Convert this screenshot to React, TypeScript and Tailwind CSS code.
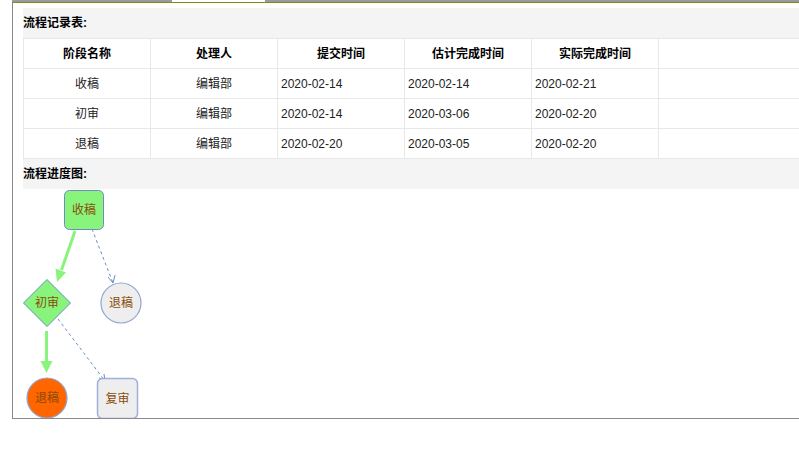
import React from "react";

const rows = [
  ["收稿", "编辑部", "2020-02-14", "2020-02-14", "2020-02-21"],
  ["初审", "编辑部", "2020-02-14", "2020-03-06", "2020-02-20"],
  ["退稿", "编辑部", "2020-02-20", "2020-03-05", "2020-02-20"],
];
const heads = ["阶段名称", "处理人", "提交时间", "估计完成时间", "实际完成时间", ""];

function Flow() {
  const blue = "#6c8ebf";
  const green = "#88f47c";
  const txt = "#8a4b08";
  return (
    <svg width="300" height="232" className="block overflow-visible" style={{ overflow: "visible" }}>
      <line x1="52" y1="42" x2="38.5" y2="81" stroke={green} strokeWidth="3" />
      <polygon points="34,93 43,83.5 32.5,79.5" fill={green} />
      <line x1="23.5" y1="142" x2="23.5" y2="173" stroke={green} strokeWidth="3" />
      <polygon points="17.5,172 29.5,172 23.5,184" fill={green} />
      <line x1="69" y1="40" x2="90" y2="94" stroke={blue} strokeWidth="1" strokeDasharray="3 3" />
      <polyline points="85,88 90,94 92,86" fill="none" stroke={blue} strokeWidth="1" />
      <line x1="35" y1="130" x2="82" y2="192" stroke={blue} strokeWidth="1" strokeDasharray="3 3" />
      <polyline points="76,189 82,192 81,185" fill="none" stroke={blue} strokeWidth="1" />
      <rect x="41.5" y="1.5" width="39" height="39" rx="5" fill={green} stroke={blue} strokeWidth="1" />
      <text x="61" y="25" textAnchor="middle" fontSize="12" fill={txt}>收稿</text>
      <polygon points="0.5,114 24,90.5 47.5,114 24,137.5" fill={green} stroke={blue} strokeWidth="1" />
      <text x="24" y="118" textAnchor="middle" fontSize="12" fill={txt}>初审</text>
      <circle cx="98" cy="114" r="20" fill="#eeeeee" stroke="#8fa6d3" strokeWidth="1.2" />
      <text x="98" y="118" textAnchor="middle" fontSize="12" fill={txt}>退稿</text>
      <circle cx="24" cy="209" r="20" fill="#ff6600" stroke="#8fa6d3" strokeWidth="1.2" />
      <text x="24" y="213" textAnchor="middle" fontSize="12" fill={txt}>退稿</text>
      <rect x="74.5" y="189.5" width="40" height="40" rx="5" fill="#eeeeee" stroke="#9db0d8" strokeWidth="1.5" />
      <text x="94.5" y="214" textAnchor="middle" fontSize="12" fill={txt}>复审</text>
    </svg>
  );
}

export default function App() {
  return (
    <div
      className="w-[799px] h-[459px] bg-white overflow-hidden relative text-[12px] text-[#222]"
      style={{ fontFamily: "'Liberation Sans','Noto Sans CJK SC',sans-serif" }}
    >
      <div className="flex h-[2px]">
        <div className="ml-[12px] w-[160px] bg-[#9a9a9a]" />
        <div className="w-[93px] bg-white" />
        <div className="flex-1 bg-[#9a9a9a]" />
      </div>
      <div className="ml-[12px] w-[800px] h-[417px] border-l border-b border-[#8a8a8a] border-t border-t-[#7c8a1e] pt-[5px] pl-[10px] overflow-hidden">
        <div className="w-[790px]">
          <div className="h-[30px] bg-[#f4f4f4] flex items-center font-bold text-black">流程记录表:</div>
          <table className="border-collapse w-[790px] table-fixed bg-white">
            <colgroup>
              <col className="w-[127px]" />
              <col className="w-[127px]" />
              <col className="w-[127px]" />
              <col className="w-[127px]" />
              <col className="w-[127px]" />
              <col />
            </colgroup>
            <thead>
              <tr className="h-[30px]">
                {heads.map((h, i) => (
                  <th key={i} className="border border-[#e8e8e8] font-bold text-center text-black p-0">{h}</th>
                ))}
              </tr>
            </thead>
            <tbody>
              {rows.map((r, i) => (
                <tr key={i} className="h-[30px]">
                  <td className="border border-[#e8e8e8] text-center p-0">{r[0]}</td>
                  <td className="border border-[#e8e8e8] text-center p-0">{r[1]}</td>
                  <td className="border border-[#e8e8e8] text-left pl-[3px]">{r[2]}</td>
                  <td className="border border-[#e8e8e8] text-left pl-[3px]">{r[3]}</td>
                  <td className="border border-[#e8e8e8] text-left pl-[3px]">{r[4]}</td>
                  <td className="border border-[#e8e8e8]"></td>
                </tr>
              ))}
            </tbody>
          </table>
          <div className="h-[30px] bg-[#f4f4f4] flex items-center font-bold text-black">流程进度图:</div>
          <Flow />
        </div>
      </div>
    </div>
  );
}
